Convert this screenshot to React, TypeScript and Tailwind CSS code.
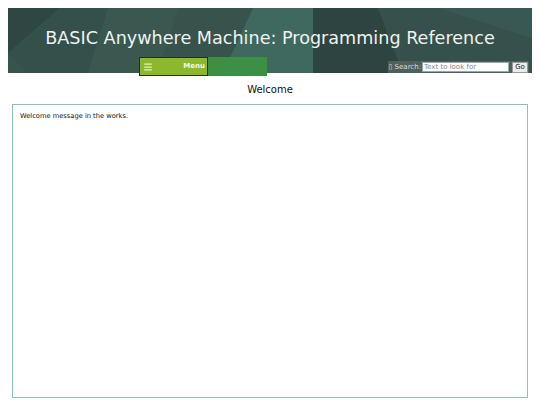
import { Menu } from 'lucide-react';

function HeaderBackdrop() {
  return (
    <svg
      className="absolute inset-0 h-full w-full"
      viewBox="0 0 524 65"
      preserveAspectRatio="none"
      aria-hidden
    >
      <rect width="524" height="65" fill="#37534c" />
      <polygon points="0,0 52,0 0,45" fill="#2f4742" />
      <polygon points="52,0 100,0 80,65 20,65 0,45" fill="#34504a" />
      <polygon points="100,0 170,0 150,65 80,65" fill="#3a5750" />
      <polygon points="245,0 305,0 305,65 215,65" fill="#3f695f" />
      <polygon points="305,0 370,0 395,65 305,65" fill="#2e4440" />
      <polygon points="370,0 524,0 524,65 395,65" fill="#36514b" />
      <polygon points="430,0 524,0 524,30" fill="#3a5853" />
    </svg>
  );
}

function SearchBox() {
  return (
    <div className="flex h-[12px] items-center gap-[1px] whitespace-nowrap bg-[#56655f]/80 pl-[1px] pr-[1px] text-[7px] text-[#d8dedc]">
      <span className="shrink-0">▯ Search:</span>
      <input
        className="h-[10px] w-[87px] shrink-0 border border-[#9aa] bg-white px-[1px] text-[7px] text-[#333] placeholder:text-[#888] outline-none"
        placeholder="Text to look for"
      />
      <button className="ml-[2px] h-[11px] w-[16px] shrink-0 border border-[#999] bg-[#ececec] text-[7px] leading-none text-[#222]">
        Go
      </button>
    </div>
  );
}

export default function App() {
  return (
    <div className="h-[405px] w-[540px] overflow-hidden bg-white pt-2 font-['DejaVu_Sans',sans-serif]">
      {/* Banner */}
      <div className="relative mx-2 h-[65px]">
        <HeaderBackdrop />
        <div className="relative flex h-full flex-col">
          <h1 className="pt-[19px] text-center text-[17.6px] leading-[22px] text-[#eef2f0]">
            BASIC Anywhere Machine: Programming Reference
          </h1>
          <div className="mt-auto flex items-end">
            <div className="ml-[131px] flex h-[19px] translate-y-[3px] bg-[#3d8f46]">
              <button className="flex w-[69px] items-center justify-between border border-[#25320f] bg-[#8cb82c] pl-[3px] pr-[2px]">
                <Menu className="h-[10px] w-[10px] text-[#e4f0c4]" strokeWidth={3} />
                <span className="text-[7px] font-bold text-[#f4f8ea]">Menu</span>
              </button>
              <div className="w-[59px]" />
            </div>
            <div className="ml-auto mr-[3px]">
              <SearchBox />
            </div>
          </div>
        </div>
      </div>

      {/* Page title */}
      <h2 className="mt-[10px] text-center text-[10px] leading-[13px] text-[#111]">Welcome</h2>

      {/* Content */}
      <div className="mx-3 mt-[8px] h-[294px] border border-[#8fc0b8] px-[7px] pt-[6px]">
        <p className="text-[6.7px] text-[#111]">Welcome message in the works.</p>
      </div>
    </div>
  );
}
